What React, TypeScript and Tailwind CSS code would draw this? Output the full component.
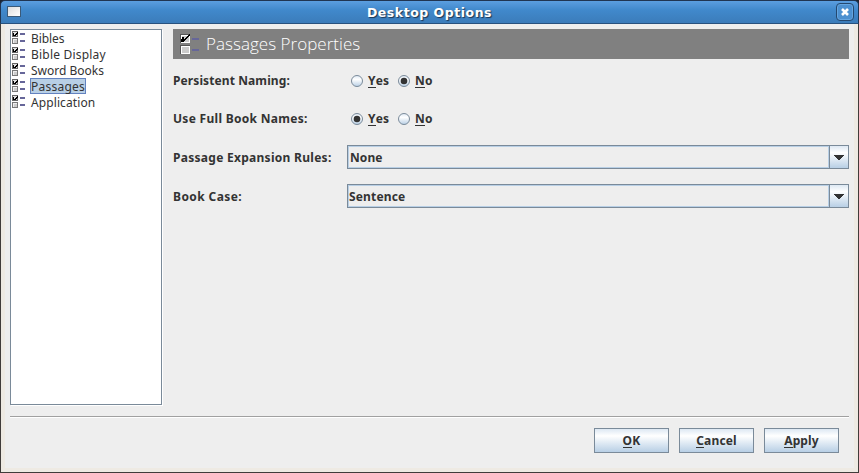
import type { ReactNode } from "react";

const items = [
  { label: "Bibles", cls: "tracking-[-0.1px]" },
  { label: "Bible Display", cls: "tracking-[0.2px]" },
  { label: "Sword Books", cls: "tracking-[0px]" },
  { label: "Passages", cls: "tracking-[0.25px]" },
  { label: "Application", cls: "tracking-[0.1px]" },
];

function SmallIcon() {
  return (
    <svg width="14" height="14" viewBox="0 0 14 14" shapeRendering="crispEdges" className="shrink-0">
      <rect x="0.5" y="0.5" width="5" height="5" fill="#ddd" stroke="#666" />
      <path d="M1 2h1v2h1v-1h1v-1h1v-1h1v2h-1v1h-1v1h-3z" fill="#000" />
      <rect x="0.5" y="7.5" width="5" height="5" fill="#ccc" stroke="#777" />
      <path d="M1 8h4v1h-3v3h-1z" fill="#eee" />
      <path d="M8 2h5v2h-5zM8 9h5v2h-5z" fill="#666699" />
    </svg>
  );
}

function HeaderIcon() {
  return (
    <svg width="20" height="22" viewBox="0 0 20 22" shapeRendering="crispEdges" className="shrink-0">
      <rect x="0.5" y="1.5" width="9" height="8" fill="#ccc" stroke="#fff" />
      <path d="M0 1h10v1h-9v8h-1z" fill="#555" />
      <path d="M1 2h8v1h-7v7h-1z" fill="#fff" />
      <path d="M2 4h2v2h1v-1h1v-1h1v-1h1v-1h1v-1h1v2h-1v1h-1v1h-1v1h-1v1h-1v1h-1v1h-3z" fill="#000" />
      <rect x="0.5" y="12.5" width="9" height="8" fill="#ccc" stroke="#fff" />
      <path d="M0 12h10v1h-9v8h-1z" fill="#555" />
      <path d="M1 13h8v1h-7v6h-1z" fill="#fff" />
      <path d="M12 5h7v2h-7zM12 16h7v2h-7z" fill="#666699" />
    </svg>
  );
}

function Radio({ on, letter, rest }: { on?: boolean; letter: string; rest: string }) {
  return (
    <div className="flex h-4 items-center gap-[5px]">
      <svg width="12" height="12" viewBox="0 0 12 12" className="mb-px shrink-0">
        <defs>
          <linearGradient id="radioFill" x1="0" y1="0" x2="0" y2="1">
            <stop offset="0" stopColor="#dde8f3" />
            <stop offset="0.35" stopColor="#ffffff" />
            <stop offset="1" stopColor="#b8cfe5" />
          </linearGradient>
        </defs>
        <circle cx="6" cy="6" r="5.5" fill="url(#radioFill)" stroke="#7a8a99" />
        {on && <circle cx="6" cy="6" r="3.3" fill="#333" />}
      </svg>
      <span className="w-[22px] whitespace-nowrap tracking-[0.2px]">
        <Key>{letter}</Key>
        {rest}
      </span>
    </div>
  );
}

function Key({ children }: { children: ReactNode }) {
  return <span className="inline-block h-[15px] border-b border-[#333] leading-4">{children}</span>;
}

function Combo({ value, pad }: { value: string; pad: string }) {
  return (
    <div className="flex h-6 w-[502px] border border-[#7a8a99]">
      <div className={`flex grow items-center border border-[#b8cfe5] pt-[2px] ${pad}`}>
        <span>{value}</span>
      </div>
      <div className="flex w-[19px] shrink-0 items-center justify-center border-l border-[#7a8a99] bg-linear-to-b from-[#dde8f3] via-white via-30% to-[#b8cfe5]">
        <svg width="10" height="5" viewBox="0 0 10 5" shapeRendering="crispEdges">
          <path d="M0 0h10v1h-1v1h-1v1h-1v1h-1v1h-2v-1h-1v-1h-1v-1h-1v-1h-1z" fill="#333" />
        </svg>
      </div>
    </div>
  );
}

function Button({ letter, rest }: { letter: string; rest: string }) {
  return (
    <button className="flex h-[25px] w-[75px] items-center justify-center border border-[#7a8a99] bg-linear-to-b from-[#dde8f3] via-white via-30% to-[#b8cfe5]">
      <span className="tracking-[0.15px]">
        <Key>{letter}</Key>
        {rest}
      </span>
    </button>
  );
}

export default function App() {
  return (
    <div className="flex h-[473px] w-[859px] flex-col overflow-hidden bg-[#1c2430] font-['Noto_Sans',sans-serif] text-[12px] leading-4 text-[#333]">
      <div className="flex h-6 shrink-0 items-center rounded-t-[5px] border border-[#203552] border-b-[#28517e] bg-linear-to-b from-[#5b9ee0] via-[#4189cc] via-40% to-[#3b7cba] pl-[6px] pr-[4px]">
        <div className="mb-px h-[11px] w-[14px] border border-[#3b5a78] bg-linear-to-br from-[#dcdcdc] to-white" />
        <div className="grow pl-[2px] pt-px text-center font-['DejaVu_Sans',sans-serif] text-[12.5px] font-bold tracking-[0.53px] text-white [text-shadow:1px_1px_1px_#1e3550]">
          Desktop Options
        </div>
        <div className="flex h-[18px] w-[18px] items-center justify-center rounded-[4px] border border-[#24486f] bg-[#4c90d0] shadow-[inset_0_0_0_1px_#65a5e0]">
          <svg width="8" height="8" viewBox="0 0 8 8">
            <path d="M1 1l6 6M7 1l-6 6" stroke="#fff" strokeWidth="2.6" />
          </svg>
        </div>
      </div>
      <div className="flex grow flex-col border-x border-b border-l-[#403c3a] border-r-[#403c3a] border-b-[#403c3a] bg-[#eeeae3] px-1 pb-1">
        <div className="flex grow flex-col bg-[#eee] px-[5px] pt-[5px]">
          <div className="flex gap-[11px]">
            <div className="h-[376px] w-[152px] shrink-0 border border-[#7a8a99] bg-white pl-px shadow-[1px_1px_0_white]">
              {items.map((item) => (
                <div key={item.label} className="flex h-4 items-center gap-[4px] text-[12px]">
                  <SmallIcon />
                  <span
                    className={`h-4 border leading-[15px] ${item.cls} ${
                      item.label === "Passages" ? "border-[#6382bf] bg-[#b8cfe5]" : "border-transparent"
                    }`}
                  >
                    {item.label}
                  </span>
                </div>
              ))}
            </div>
            <div className="flex w-[676px] flex-col font-bold">
              <div className="flex h-[30px] items-center gap-[6px] bg-[#808080] pl-[7px] font-['Open_Sans',sans-serif] text-[17px] font-light tracking-[0.03px] text-white">
                <HeaderIcon />
                <span>Passages Properties</span>
              </div>
              <div className="mt-[14px] flex h-4 items-center">
                <div className="w-[178px] tracking-[0.1px]">Persistent Naming:</div>
                <div className="flex gap-[8px]">
                  <Radio letter="Y" rest="es" />
                  <Radio on letter="N" rest="o" />
                </div>
              </div>
              <div className="mt-[22px] flex h-4 items-center">
                <div className="w-[178px] tracking-[0.3px]">Use Full Book Names:</div>
                <div className="flex gap-[8px]">
                  <Radio on letter="Y" rest="es" />
                  <Radio letter="N" rest="o" />
                </div>
              </div>
              <div className="mt-[18px] flex items-center">
                <div className="w-[174px] pt-[2px] tracking-[0.28px]">Passage Expansion Rules:</div>
                <Combo value="None" pad="pl-px tracking-[0.1px]" />
              </div>
              <div className="mt-[15px] flex items-center">
                <div className="w-[174px] pt-[2px] tracking-[0.4px]">Book Case:</div>
                <Combo value="Sentence" pad="pl-0 tracking-[0.15px]" />
              </div>
            </div>
          </div>
          <div className="mt-[11px] h-[2px] w-[839px] border-b border-t border-b-white border-t-[#a0a0a0]" />
          <div className="mt-[10px] flex justify-end gap-[10px] pr-[10px] font-bold">
            <Button letter="O" rest="K" />
            <Button letter="C" rest="ancel" />
            <Button letter="A" rest="pply" />
          </div>
        </div>
      </div>
    </div>
  );
}
